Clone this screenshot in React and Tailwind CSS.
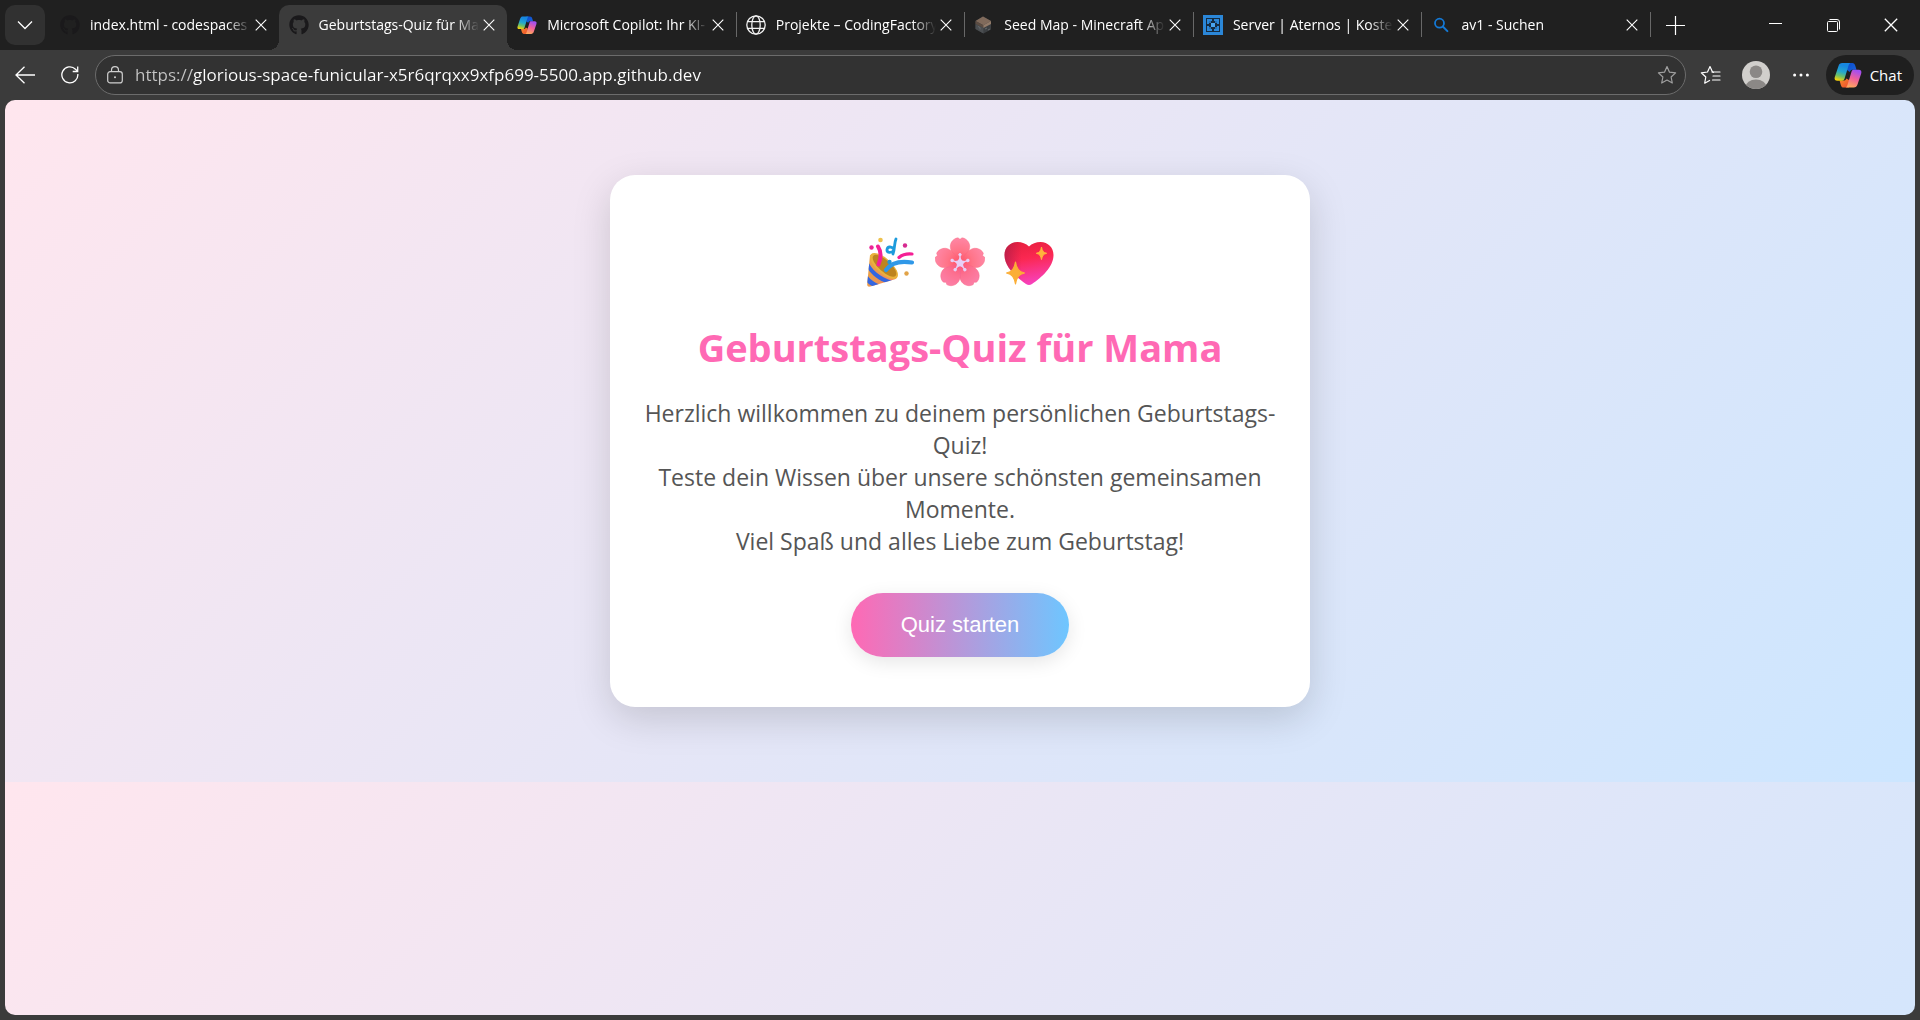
import React, { useId, useState } from 'react';
import { FaGithub } from 'react-icons/fa';

/* ---------- Favicons ---------- */

const CopilotIcon = ({ className }) => {
  const id = useId();

  return (
    <svg viewBox="0 0 28 26" className={className} aria-hidden="true">
      <defs>
        <linearGradient id={`${id}a`} x1="0.6" y1="0" x2="0.35" y2="1">
          <stop offset="0.15" stopColor="#1787e0" />
          <stop offset="0.5" stopColor="#25a8cc" />
          <stop offset="0.75" stopColor="#6cc069" />
          <stop offset="1" stopColor="#f5d20a" />
        </linearGradient>
        <linearGradient id={`${id}b`} x1="0.7" y1="0" x2="0.35" y2="1">
          <stop offset="0.05" stopColor="#a34ff0" />
          <stop offset="0.5" stopColor="#f0609a" />
          <stop offset="1" stopColor="#ffa95c" />
        </linearGradient>
        <linearGradient id={`${id}c`} x1="0" y1="0" x2="1" y2="1">
          <stop offset="0" stopColor="#0b49c8" />
          <stop offset="1" stopColor="#1a66e0" />
        </linearGradient>
        <linearGradient id={`${id}d`} x1="0" y1="0" x2="1" y2="1">
          <stop offset="0" stopColor="#f7902c" />
          <stop offset="1" stopColor="#ee4a2d" />
        </linearGradient>
      </defs>
      <path d="M13 1h5.2c1.8 0 2.5 1 3 2.6l1.3 4.2h-3.6c-1.6 0-2.6.6-3.2 2.2L13 8z" fill={`url(#${id}c)`} />
      <path d="M15 25.500H9.800c-1.800 0-2.500-1-3-2.600L5.600 18.600h3.600c1.600 0 2.600-.6 3.200-2.200L15 18z" fill={`url(#${id}d)`} />
      <path d="M8.300 1h8.300c-1.200.4-1.700 1.500-2.100 2.800l-4 13c-.4 1.300-1.100 1.900-2.400 1.900H3.400C1 18.700.1 17.200.8 15L4.500 3.900C5.200 1.900 6.200 1 8.300 1z" fill={`url(#${id}a)`} />
      <path d="M19.700 25.500h-8.300c1.200-.4 1.700-1.500 2.100-2.800l4-13c.4-1.300 1.100-1.900 2.400-1.900h4.700c2.400 0 3.300 1.500 2.600 3.700l-3.700 11.100c-.7 2-1.700 2.900-3.800 2.900z" fill={`url(#${id}b)`} />
    </svg>
  );
};

const GithubIcon = () => <FaGithub className="h-5 w-5 text-[#1a191b]" aria-hidden="true" />;

const GlobeIcon = () => (
  <svg viewBox="0 0 20 20" className="h-5 w-5" fill="none" stroke="#f2f2f2" strokeWidth="1.300" aria-hidden="true">
    <circle cx="10" cy="10" r="9.200" />
    <ellipse cx="10" cy="10" rx="4.200" ry="9.200" />
    <path d="M1.500 6.700h17M1.500 13.300h17" />
  </svg>
);

const BlockIcon = () => (
  <svg viewBox="0 0 20 20" className="h-5 w-5" aria-hidden="true">
    <path d="M9 1.500 17 6v8.500l-7.500 4L1.500 14V6z" fill="#3c3f42" />
    <path d="M9 1.500 17 6l-7.600 4.200L1.500 6z" fill="#806a5b" />
    <path d="M1.500 6 9.400 10.200V13L1.500 9z" fill="#5c4c42" />
    <path d="M17 6 9.400 10.200V13L17 9z" fill="#937b69" />
    <path d="M1.500 9 9.400 13v5.500L1.500 14z" fill="#4b4e51" />
    <path d="M4 11.500l2 1v2M11 14l2-1M14 15l2-1" stroke="#66696c" fill="none" />
  </svg>
);

const AternosIcon = () => (
  <svg viewBox="0 0 20 20" className="h-5 w-5" aria-hidden="true">
    <path d="M0 0h20v20H0z" fill="#2b87d8" />
    <path d="M3 3h14v14H3z" fill="#152c42" />
    <path d="M4 4h5v2H6v3H4zM11 4h5v5h-2V6h-3zM4 11h2v3h3v2H4zM14 11h2v5h-5v-2h3z" fill="#2b87d8" />
    <path d="M6 6h2v2H6zM12 6h2v2h-2zM6 12h2v2H6zM12 12h2v2h-2z" fill="#2470b4" />
    <path d="M8 8h4v4H8z" fill="#4aa4ee" />
  </svg>
);

const SearchIcon = () => (
  <svg viewBox="0 0 20 20" className="h-5 w-5" fill="none" stroke="#1478d4" strokeWidth="1.800" aria-hidden="true">
    <circle cx="8.500" cy="8.200" r="4.500" />
    <path d="m11.800 11.500 4.600 4.600" strokeWidth="2" strokeLinecap="round" />
  </svg>
);

/* ---------- Browser icons ---------- */

const CloseIcon = ({ className }) => (
  <svg viewBox="0 0 12 12" className={className} fill="none" stroke="currentColor" strokeWidth="1.100" aria-hidden="true">
    <path d="m.7.7 10.600 10.600M11.300.7.7 11.300" />
  </svg>
);

const STAR_PATH = 'M10 1.600l2.500 5.600 6.100.7-4.500 4.100 1.200 6-5.300-3-5.300 3 1.200-6L1.400 7.900l6.100-.7z';

/* ---------- Emojis ---------- */

const PartyEmoji = () => (
  <svg viewBox="0 0 50 50" className="h-[50px] w-[50px]" role="img" aria-label="Konfetti">
    <defs>
      <linearGradient id="cone" x1="0" y1="0" x2="1" y2="0.4">
        <stop offset="0" stopColor="#e8a53c" />
        <stop offset="1" stopColor="#f08b62" />
      </linearGradient>
      <clipPath id="coneClip">
        <path d="M4 18c3-1 26 16 27 21 .3 1.500-.5 2.500-2 3.200L4.500 49.500c-2.500.5-3.500-.5-3.300-2.500z" />
      </clipPath>
    </defs>
    <g clipPath="url(#coneClip)">
      <path d="M0 15h34v35H0z" fill="url(#cone)" />
      <path d="M2 24c3 8 12 16.500 25 20l-5 2.500C13 44 5 37 2 32zM1 37.500c2 4 7 8 13 10L8 50c-3-1.500-6-3.500-8-6z" fill="#3466e0" />
    </g>
    <ellipse cx="18" cy="29" rx="17.500" ry="7.500" transform="rotate(42 18 29)" fill="#e9b23c" />
    <ellipse cx="18.500" cy="28.800" rx="15" ry="5.800" transform="rotate(42 18.500 28.800)" fill="#bd8420" />
    <path d="M12 9.500c4 6 3 12 .5 18" fill="none" stroke="#f51f95" strokeWidth="4" strokeLinecap="round" />
    <path d="M20 33c5-7 14-9.500 26-7.500" fill="none" stroke="#2f98e8" strokeWidth="4.200" strokeLinecap="round" />
    <path d="M33 20.500c4-3.500 8-4 13-3.500" fill="none" stroke="#f51f95" strokeWidth="3.200" strokeLinecap="round" />
    <path d="M30 2c-2 4-1 10-3 15M27.500 12c-2-3-6-2.500-6.500.5s4 4.500 7 .5" fill="none" stroke="#1d9bdc" strokeWidth="2.800" strokeLinecap="round" />
    <circle cx="14.500" cy="3" r="2.300" fill="#edc14d" />
    <circle cx="5.500" cy="10.500" r="2.200" fill="#ec2596" />
    <circle cx="39" cy="8.500" r="2.200" fill="#d62a90" />
    <circle cx="23.500" cy="25" r="2.200" fill="#2596d8" />
    <circle cx="40.500" cy="36.500" r="2.200" fill="#e1a347" />
  </svg>
);

const BlossomEmoji = () => (
  <svg viewBox="0 0 50 50" className="h-[50px] w-[50px]" role="img" aria-label="Blüte">
    <defs>
      <radialGradient id="petal" gradientUnits="userSpaceOnUse" cx="25" cy="26" r="25">
        <stop offset="0" stopColor="#ff4f63" />
        <stop offset="0.5" stopColor="#ff7488" />
        <stop offset="1" stopColor="#ff86a4" />
      </radialGradient>
      <path id="petalShape" d="M25 26C19 20 14 13 15.500 7.500 16.500 3.500 20 1 23 .8L25 2.300 27 .8c3 .2 6.500 2.700 7.500 6.700C36 13 31 20 25 26z" />
    </defs>
    {[0, 72, 144, 216, 288].map((angle) => (
      <use key={angle} href="#petalShape" transform={`rotate(${angle} 25 26)`} fill="url(#petal)" stroke="#f8647e" strokeWidth="0.400" />
    ))}
    {[144, 216].map((angle) => (
      <use key={angle} href="#petalShape" transform={`rotate(${angle} 25 26)`} fill="#ee66b4" fillOpacity="0.200" />
    ))}
    {[0, 72, 144, 216, 288].map((angle) => (
      <g key={angle} transform={`rotate(${angle} 25 26)`} fill="#e8d0f8" stroke="#e8d0f8">
        <path d="M25 26v-8" strokeWidth="1.300" />
        <circle cx="25" cy="17.700" r="1.200" />
        <path d="m21.500 26 3.500-6 3.500 6z" stroke="none" />
      </g>
    ))}
  </svg>
);

const HeartEmoji = () => (
  <svg viewBox="0 0 50 50" className="h-[50px] w-[50px]" role="img" aria-label="Funkelndes Herz">
    <defs>
      <linearGradient id="heart" x1="0.300" y1="0" x2="0.500" y2="1">
        <stop offset="0" stopColor="#e8203f" />
        <stop offset="0.400" stopColor="#fb2852" />
        <stop offset="1" stopColor="#f742c0" />
      </linearGradient>
      <linearGradient id="heartShade" x1="0" y1="0.500" x2="1" y2="0.500">
        <stop offset="0" stopColor="#8a1a4a" stopOpacity="0.500" />
        <stop offset="0.350" stopColor="#a01a4a" stopOpacity="0" />
      </linearGradient>
      <path id="heartShape" d="M25 9.500C28 6.500 32 5 36.500 5 44 5 49.500 10.500 49.500 18c0 12-12 22.500-21.500 29-2 1.400-4 1.400-6 0C12.500 40.500.5 30 .5 18 .5 10.500 6 5 13.500 5 18 5 22 6.500 25 9.500z" />
    </defs>
    <use href="#heartShape" fill="url(#heart)" />
    <use href="#heartShape" fill="url(#heartShade)" />
    <path d="M37.500 10c.7 4 2 5.600 5.200 6.300-3.200.7-4.500 2.300-5.200 6.300-.7-4-2-5.600-5.200-6.300 3.200-.7 4.500-2.300 5.200-6.300z" fill="#ffb43c" stroke="#ffb43c" strokeLinejoin="round" />
    <path d="M11.500 25c1.200 7 3.300 9.800 9 11-5.700 1.200-7.800 4-9 11-1.200-7-3.300-9.800-9-11 5.700-1.200 7.800-4 9-11z" fill="#fbae36" stroke="#fbae36" strokeWidth="1.200" strokeLinejoin="round" />
  </svg>
);

/* ---------- Tabs ---------- */

const TABS = [
  { title: 'index.html - codespaces', icon: <GithubIcon /> },
  { title: 'Geburtstags-Quiz für Ma', icon: <GithubIcon /> },
  { title: 'Microsoft Copilot: Ihr KI-', icon: <CopilotIcon className="h-5 w-5" /> },
  { title: 'Projekte – CodingFactory', icon: <GlobeIcon /> },
  { title: 'Seed Map - Minecraft Ap', icon: <BlockIcon /> },
  { title: 'Server | Aternos | Koster', icon: <AternosIcon /> },
  { title: 'av1 - Suchen', icon: <SearchIcon /> },
];

const Tab = ({ title, icon, active, divider, onSelect }) => (
  <div
    className={`relative flex h-[45px] min-w-0 flex-1 items-center pr-[10px] pb-[5px] pl-[10px] ${
      active ? 'rounded-t-[10px] bg-[#3b3b3b]' : ''
    }`}
  >
    {active && (
      <>
        {/* Curved feet of the selected tab */}
        <span className="absolute bottom-0 -left-[10px] h-[10px] w-[10px] bg-[radial-gradient(circle_at_0_0,transparent_10px,#3b3b3b_10px)]" />
        <span className="absolute -right-[10px] bottom-0 h-[10px] w-[10px] bg-[radial-gradient(circle_at_100%_0,transparent_10px,#3b3b3b_10px)]" />
      </>
    )}
    <button type="button" onClick={onSelect} className="flex min-w-0 flex-1 items-center gap-[10px] text-left">
      <span className="shrink-0">{icon}</span>
      <span className="min-w-0 flex-1 overflow-hidden mask-r-from-[calc(100%-24px)] text-sm leading-5 whitespace-nowrap text-white">
        {title}
      </span>
    </button>
    <button type="button" aria-label={`${title} schließen`} className="ml-[2px] flex h-5 w-4 shrink-0 items-center justify-center text-white">
      <CloseIcon className="h-3 w-3" />
    </button>
    {divider && <span className="absolute top-[7px] -right-px h-[25px] w-px bg-[#686868]" />}
  </div>
);

const TabStrip = () => {
  const [activeTab, setActiveTab] = useState(1);

  return (
    <div className="flex h-[50px] items-start bg-[#202020] pt-[5px]">
      <button type="button" aria-label="Tabs durchsuchen" className="mx-[5px] flex h-10 w-10 shrink-0 items-center justify-center rounded-[10px] bg-[#313131] text-white">
        <svg viewBox="0 0 16 10" className="h-[10px] w-4" fill="none" stroke="currentColor" strokeWidth="1.300" aria-hidden="true">
          <path d="m1 1.500 7 7 7-7" />
        </svg>
      </button>

      <div className="flex min-w-0 flex-1">
        {TABS.map((tab, index) => (
          <Tab
            key={tab.title}
            {...tab}
            active={index === activeTab}
            divider={index !== activeTab && index !== activeTab - 1}
            onSelect={() => setActiveTab(index)}
          />
        ))}
      </div>

      <button type="button" aria-label="Neuer Tab" className="mr-[46px] flex h-10 w-[50px] shrink-0 items-center justify-center text-white">
        <svg viewBox="0 0 19 19" className="h-[19px] w-[19px]" stroke="currentColor" strokeWidth="1.200" aria-hidden="true">
          <path d="M9.500 0v19M0 9.500h19" />
        </svg>
      </button>

      <div className="flex shrink-0 text-white">
        <button type="button" aria-label="Minimieren" className="flex h-10 w-[58px] items-center justify-center">
          <span className="mb-[3px] h-px w-[13px] bg-white" />
        </button>
        <button type="button" aria-label="Verkleinern" className="flex h-10 w-[58px] items-center justify-center">
          <svg viewBox="0 0 13 13" className="h-[13px] w-[13px]" fill="none" stroke="currentColor" aria-hidden="true">
            <rect x="0.500" y="2.500" width="10" height="10" rx="1" />
            <path d="M2.500.5H10A2.500 2.500 0 0 1 12.500 3v7.500" />
          </svg>
        </button>
        <button type="button" aria-label="Schließen" className="flex h-10 w-[58px] items-center justify-center">
          <CloseIcon className="h-[14px] w-[14px]" />
        </button>
      </div>
    </div>
  );
};

/* ---------- Toolbar ---------- */

const Toolbar = () => (
  <div className="flex h-[50px] items-center bg-[#3b3b3b] pr-[6px] pl-[5px] text-white">
    <button type="button" aria-label="Zurück" className="flex h-10 w-10 items-center justify-center">
      <svg viewBox="0 0 20 18" className="h-[18px] w-5" fill="none" stroke="currentColor" strokeWidth="1.300" aria-hidden="true">
        <path d="M20 9H1M9.500.7 1 9l8.500 8.300" />
      </svg>
    </button>
    <button type="button" aria-label="Neu laden" className="ml-[5px] flex h-10 w-10 items-center justify-center">
      <svg viewBox="0 0 18 18" className="h-[18px] w-[18px]" fill="none" stroke="currentColor" strokeWidth="1.300" aria-hidden="true">
        <path d="M16.800 8A8 8 0 1 1 14.500 3.200L16.500 5.200" />
        <path d="M16.700.5v5h-5" />
      </svg>
    </button>

    {/* Address bar */}
    <div className="ml-[5px] flex h-10 min-w-0 flex-1 items-center rounded-full border border-[#6c6c6c] bg-[#323232] pr-2 pl-[11px]">
      <svg viewBox="0 0 16 18" className="h-[18px] w-4 shrink-0" fill="none" stroke="#d0d0d0" strokeWidth="1.200" aria-hidden="true">
        <rect x="0.700" y="5.700" width="14.600" height="11.200" rx="2.500" />
        <path d="M4.500 5.700V4.200a3.500 3.500 0 0 1 7 0v1.500" />
        <circle cx="8" cy="11.300" r="1" fill="#d0d0d0" stroke="none" />
      </svg>
      <input
        type="text"
        aria-label="Adresse"
        defaultValue="https://glorious-space-funicular-x5r6qrqxx9xfp699-5500.app.github.dev"
        className="ml-3 min-w-0 flex-1 bg-linear-to-r from-[#c4c4c4] from-[57px] to-white to-[57px] bg-clip-text text-[17px] leading-6 text-transparent caret-white outline-none"
      />
      <button type="button" aria-label="Zu Favoriten hinzufügen" className="shrink-0">
        <svg viewBox="0 0 20 20" className="h-5 w-5" fill="none" stroke="#a0a0a0" strokeWidth="1.200" strokeLinejoin="round" aria-hidden="true">
          <path d={STAR_PATH} />
        </svg>
      </button>
    </div>

    <button type="button" aria-label="Favoriten" className="ml-[5px] flex h-10 w-10 items-center justify-center">
      <svg viewBox="0 0 21 20" className="h-5 w-[21px]" fill="none" stroke="currentColor" strokeWidth="1.200" strokeLinejoin="round" aria-hidden="true">
        <path d="M14 7.300 12.500 7 10 1.600 7.500 7l-6.200.8 4.500 4.200-1.100 6.200 5.300-3" />
        <path d="M12 7h8M13 11h7M12.500 15H20" strokeLinecap="round" />
      </svg>
    </button>
    <button type="button" aria-label="Profil" className="ml-[5px] flex h-10 w-10 items-center justify-center">
      <svg viewBox="0 0 28 28" className="h-7 w-7" aria-hidden="true">
        <defs>
          <clipPath id="avatar">
            <circle cx="14" cy="14" r="14" />
          </clipPath>
        </defs>
        <g clipPath="url(#avatar)">
          <path d="M0 0h28v28H0z" fill="#d1cfcc" />
          <circle cx="14" cy="10.800" r="6.300" fill="#8b8886" />
          <ellipse cx="14" cy="26" rx="10.500" ry="7.500" fill="#8b8886" />
        </g>
      </svg>
    </button>
    <button type="button" aria-label="Einstellungen und mehr" className="ml-[5px] flex h-10 w-10 items-center justify-center">
      <svg viewBox="0 0 16 4" className="h-1 w-4" fill="currentColor" aria-hidden="true">
        <circle cx="1.600" cy="2" r="1.500" />
        <circle cx="8" cy="2" r="1.500" />
        <circle cx="14.400" cy="2" r="1.500" />
      </svg>
    </button>
    <button type="button" className="ml-[5px] flex h-10 items-center gap-2 rounded-full bg-[#1f1f1f] pr-3 pl-2 text-[15px] leading-5">
      <CopilotIcon className="h-[26px] w-7" />
      Chat
    </button>
  </div>
);

/* ---------- Page ---------- */

const QuizCard = () => (
  <section className="mx-auto w-full max-w-[700px] rounded-[25px] bg-white px-8 pt-[62px] pb-[50px] text-center shadow-[0_12px_38px_rgba(0,0,0,0.15)]">
    <div className="flex justify-center gap-[19px]">
      <PartyEmoji />
      <BlossomEmoji />
      <HeartEmoji />
    </div>
    <h1 className="mt-9 text-[38px] leading-[48px] font-bold text-[#ff69b4]">Geburtstags-Quiz für Mama</h1>
    <p className="mt-[26px] text-[23px] leading-8 text-[#555]">
      Herzlich willkommen zu deinem persönlichen Geburtstags-Quiz!
      <br />
      Teste dein Wissen über unsere schönsten gemeinsamen Momente.
      <br />
      Viel Spaß und alles Liebe zum Geburtstag!
    </p>
    <button
      type="button"
      className="mt-9 h-16 rounded-full bg-[linear-gradient(90deg,#ff69b4,#6ec6ff)] px-[50px] pb-0.5 font-['Liberation_Sans',Arial,sans-serif] text-[22px] text-white shadow-[0_5px_19px_rgba(0,0,0,0.1)]"
    >
      Quiz starten
    </button>
  </section>
);

export default function App() {
  return (
    <div className="flex min-h-screen flex-col bg-[#3b3b3b] font-['Open_Sans','Noto_Sans',sans-serif]">
      <header>
        <TabStrip />
        <Toolbar />
      </header>
      <main className="mx-[5px] mb-[5px] flex-1 rounded-[10px] bg-[linear-gradient(135deg,#ffe6ee,#cce6ff)] bg-[length:100%_682px] py-[75px]">
        <QuizCard />
      </main>
    </div>
  );
}
